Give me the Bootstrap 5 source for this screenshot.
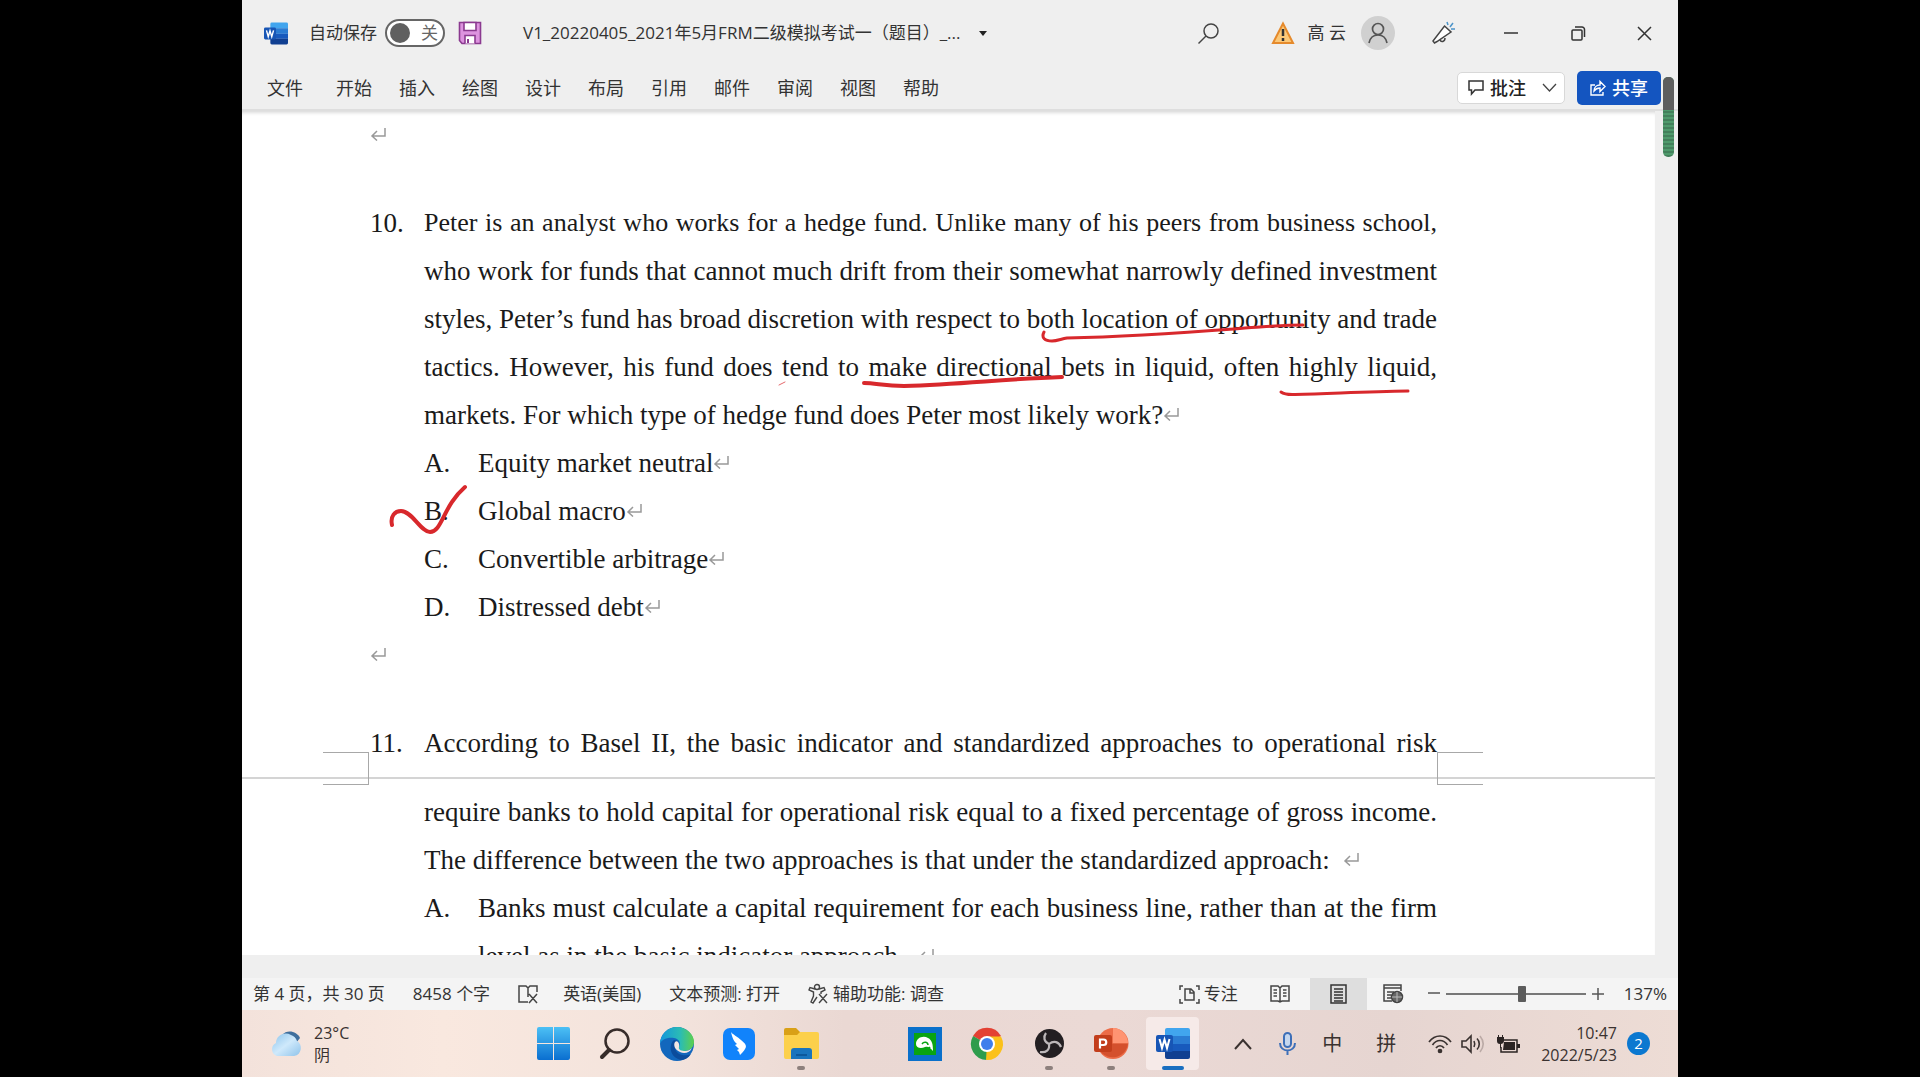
<!DOCTYPE html>
<html lang="zh-CN">
<head>
<meta charset="utf-8">
<meta name="viewport" content="width=device-width, initial-scale=1">
<title>Word</title>
<link rel="stylesheet" href="https://cdn.jsdelivr.net/npm/bootstrap@5.3.0/dist/css/bootstrap.min.css">
<style>
  body { background: #000; color: #333; font: 17px/24px "Open Sans", "Noto Sans CJK SC", sans-serif; }
  button { font: inherit; color: inherit; }
  svg { display: block; flex: none; overflow: visible; }
  .desk { margin: 0 242px; background: #efefef; }
  .plain { border: 0; background: none; padding: 0; display: flex; align-items: center; justify-content: center; }

  .titlebar { height: 66px; padding: 0 0 0 22px; }
  .autosave { gap: 8px; margin: 0 13px 0 21px; }
  .pill { width: 60px; height: 28px; border: 2px solid #666; border-radius: 14px; background: #fff; color: #666; padding: 0 5px 0 3px; }
  .pill input { appearance: none; width: 20px; height: 20px; border-radius: 50%; background: #606060; margin: 0; }
  .doc-title { margin-left: 41px; gap: 18px; white-space: nowrap; }
  .win-btn { width: 67px; height: 54px; }
  .who { margin: 0 15px 0 14px; gap: 15px; }
  .avatar-disc { width: 34px; height: 34px; border-radius: 50%; background: #d0d0d0; }
  .find { margin-right: 53px; }

  .tabs { height: 45px; padding: 0 17px 0 25px; border-bottom: 2px solid #dedede; }
  .tabs .nav { gap: 27px; }
  .tabs .nav-link { padding: 0; color: #333; font-size: 18px; }
  .tabs .nav-item:first-child { margin-right: 6px; }
  .notes-btn { height: 32px; padding: 0 7px 0 10px; gap: 6px; background: #fff; border: 1px solid #d8d8d8; border-radius: 5px; font-size: 18px; font-weight: 500; color: #222; }
  .notes-btn .chev { margin-left: 10px; }
  .share-btn { height: 34px; width: 84px; gap: 6px; border-radius: 5px; background: #1455c0; color: #fff; font-size: 18px; font-weight: 500; }

  .work { min-height: 0; }
  .sheet { background: #fff; overflow: hidden; position: relative; color: #1a1a1a; font: 27px/48px "Liberation Serif", "Noto Sans CJK SC", serif; box-shadow: inset 0 4px 4px -3px #ccc; }
  .gutter { width: 23px; position: relative; }
  .thumb { position: absolute; right: 4px; top: -34px; width: 11px; height: 80px; border-radius: 5px; background: repeating-linear-gradient(#4f9a6c 0 2px, #43805b 2px 4px); overflow: hidden; }
  .thumb span { display: block; height: 33px; background: #5e5e5e; }
  .block-row { margin: 0 218px 0 128px; }
  .blank-row { height: 46px; margin-bottom: 42px; }
  .num { width: 54px; flex: none; }
  .body-col { min-width: 0; }
  .ln { display: block; text-align: justify; text-align-last: justify; white-space: nowrap; }
  .ln-dense { font-size: 26px; }
  .ret { display: inline-block; vertical-align: 3px; }
  .page-gap { height: 21px; position: relative; }
  .page-gap::before { content: ""; position: absolute; left: 0; right: 0; top: 10px; border-top: 2px solid #d4d4d4; }
  .corner-l, .corner-r { position: absolute; top: -15px; height: 33px; width: 46px; border: 1px solid #a8a8a8; }
  .corner-l { left: 81px; border-left: 0; }
  .corner-r { right: 172px; border-right: 0; }
  .ink { position: absolute; left: 0; top: 0; pointer-events: none; }

  .under { height: 23px; }
  .status { height: 32px; background: #f4f4f4; padding: 0 11px 0 11px; white-space: nowrap; }
  .status .plain { height: 32px; }
  .gap-28 { margin-left: 28px; }
  .pct { margin-left: 20px; }
  .view-on { background: #dedede; }
  .zoomer { appearance: none; width: 140px; height: 20px; background: linear-gradient(#777, #777) center/100% 2px no-repeat; margin: 0 6px; }
  .zoomer::-webkit-slider-thumb { appearance: none; width: 8px; height: 16px; background: #5c5c5c; border-radius: 1px; }

  .taskbar { height: 67px; background: linear-gradient(90deg, #f3e2db 0, #f9e8df 14%, #f3e3dc 30%, #ead8d3 42%, #ebd9d5 60%, #e6d5d1 80%, #eddcd5 100%); white-space: nowrap; color: #3a3230; }
  .weather { padding-left: 28px; gap: 12px; width: 280px; line-height: 22px; font-size: 16px; text-align: left; }
  .app { width: 62px; height: 67px; position: relative; }
  .app.run::after { content: ""; position: absolute; left: 27px; bottom: 7px; width: 8px; height: 4px; border-radius: 2px; background: #8d807d; }
  .app.now::before { content: ""; position: absolute; left: 4px; top: 7px; width: 53px; height: 53px; border-radius: 4px; background: #f6eae8; }
  .app.now::after { left: 20px; width: 22px; background: #1a6fc0; }
  .app svg { position: relative; }
  .tray { margin-right: 28px; }
  .clock { font-size: 16px; line-height: 22px; text-align: right; margin: 0 10px 0 21px; }
  .count { width: 23px; height: 23px; border-radius: 50%; background: #0b78d0; color: #fff; font-size: 15px; line-height: 23px; }
  .ime { font-size: 20px; margin-left: 24px; }
  .ime + .ime { margin-left: 34px; }
  .wifi { margin: 0 9px 0 32px; }
  .vol { margin-right: 11px; }
</style>
<script src="https://cdn.jsdelivr.net/npm/bootstrap@5.3.0/dist/js/bootstrap.bundle.min.js"></script>
</head>
<body>
<svg width="0" height="0" class="position-absolute" aria-hidden="true">
  <defs>
    <linearGradient id="blu" x2="0" y2="1"><stop offset="0" stop-color="#4cc0f5"/><stop offset="1" stop-color="#0a6fd0"/></linearGradient>
    <linearGradient id="edg" x1="0" y1="0" x2="1" y2="0"><stop offset="0" stop-color="#1496dc"/><stop offset=".6" stop-color="#2bbcb4"/><stop offset="1" stop-color="#5ed04b"/></linearGradient>
    <linearGradient id="cld" x2="1" y2="1"><stop offset="0" stop-color="#8cc4ec"/><stop offset=".5" stop-color="#cfe9fb"/><stop offset="1" stop-color="#8fc3ea"/></linearGradient>
    <symbol id="ret" viewBox="0 0 16 14"><path d="M15 1v8H2M7 4L2 9l5 4.500" fill="none" stroke="#999" stroke-width="1.500"/></symbol>
    <symbol id="word" viewBox="0 0 34 31">
      <path d="M9 2a2 2 0 0 1 2-2h21a2 2 0 0 1 2 2v6H9z" fill="#41a5ee"/><path d="M9 8h25v8H9z" fill="#2b7cd3"/><path d="M9 16h25v7H9z" fill="#185abd"/><path d="M9 23h25v6a2 2 0 0 1-2 2H11a2 2 0 0 1-2-2z" fill="#103f91"/>
      <rect y="7" width="17" height="17" rx="2" fill="#1755b5"/><path d="M3.500 11l2.500 9 2.500-8.500L11 20l2.500-9" fill="none" stroke="#fff" stroke-width="2"/>
    </symbol>
  </defs>
</svg>

<div class="desk vh-100 d-flex flex-column overflow-hidden">
  <header class="titlebar d-flex align-items-center flex-shrink-0">
    <svg width="24" height="23"><use href="#word"/></svg>
    <label class="autosave d-flex align-items-center">自动保存
      <span class="pill d-flex align-items-center justify-content-between"><input type="checkbox" role="switch"><span>关</span></span>
    </label>
    <button class="plain" aria-label="保存"><svg width="24" height="24" viewBox="0 0 24 24"><path d="M1.500 1.500h21v21H4l-2.500-3z" fill="#dd93df" stroke="#8b3a90" stroke-width="1.600"/><path d="M6 1.500h12v8H6zM7 22.500v-8h10v8" fill="#fff" stroke="#8b3a90" stroke-width="1.600"/><path d="M10 22v-4" stroke="#8b3a90" stroke-width="2"/></svg></button>
    <button class="plain doc-title">V1_20220405_2021年5月FRM二级模拟考试一（题目）_...
      <svg width="8" height="5"><path d="M0 0h8L4 5z" fill="#222"/></svg></button>
    <button class="plain find ms-auto" aria-label="搜索"><svg width="21" height="21" fill="none" stroke="#444" stroke-width="1.500"><circle cx="13" cy="8" r="7"/><path d="M8 13l-7.500 7.500"/></svg></button>
    <svg width="22" height="22"><path d="M11 1.500L21 21H1z" fill="#fbc878" stroke="#e58a2c" stroke-width="2"/><path d="M11 7v7M11 16v3" stroke="#333" stroke-width="2.500"/></svg>
    <div class="who d-flex align-items-center"><span>高 云</span>
      <span class="avatar-disc d-flex align-items-center justify-content-center"><svg width="20" height="21" fill="none" stroke="#555" stroke-width="1.700"><circle cx="10" cy="6" r="5.500"/><path d="M1 20c1-5 4-8 9-8s8 3 9 8"/></svg></span></div>
    <button class="plain win-btn" aria-label="即将推出"><svg width="24" height="24" fill="none" stroke="#444" stroke-width="1.500"><path d="M12.500 5l6.500 6L5 20.500l-2.500 1.500-1.500-2z" fill="#fff"/><path d="M8 19c1 2.500 5 2 5-2"/><path d="M15 1l1 3M21 2l-3 4M19 8h4" stroke="#4b93c9"/></svg></button>
    <button class="plain win-btn" aria-label="最小化"><svg width="14" height="2"><path d="M0 1h14" stroke="#333" stroke-width="1.500"/></svg></button>
    <button class="plain win-btn" aria-label="还原"><svg width="14" height="15" fill="none" stroke="#333" stroke-width="1.500"><rect x="1" y="4" width="10" height="10" rx="1"/><path d="M4 1h7a2.500 2.500 0 0 1 2.500 2.500V11"/></svg></button>
    <button class="plain win-btn" aria-label="关闭"><svg width="15" height="15"><path d="M1 1l13 13M14 1L1 14" stroke="#333" stroke-width="1.500"/></svg></button>
  </header>

  <div class="tabs d-flex align-items-center flex-shrink-0">
    <ul class="nav flex-nowrap">
      <li class="nav-item"><a class="nav-link" href="#">文件</a></li>
      <li class="nav-item"><a class="nav-link" href="#">开始</a></li>
      <li class="nav-item"><a class="nav-link" href="#">插入</a></li>
      <li class="nav-item"><a class="nav-link" href="#">绘图</a></li>
      <li class="nav-item"><a class="nav-link" href="#">设计</a></li>
      <li class="nav-item"><a class="nav-link" href="#">布局</a></li>
      <li class="nav-item"><a class="nav-link" href="#">引用</a></li>
      <li class="nav-item"><a class="nav-link" href="#">邮件</a></li>
      <li class="nav-item"><a class="nav-link" href="#">审阅</a></li>
      <li class="nav-item"><a class="nav-link" href="#">视图</a></li>
      <li class="nav-item"><a class="nav-link" href="#">帮助</a></li>
    </ul>
    <button class="plain notes-btn ms-auto me-2"><svg width="16" height="15" fill="none" stroke="#333" stroke-width="1.500"><path d="M1 1h14v9H7l-3.500 4v-4H1z"/></svg>批注<svg class="chev" width="15" height="8" fill="none" stroke="#444" stroke-width="1.300"><path d="M1 0l6.500 7L14 0"/></svg></button>
    <button class="plain share-btn ms-1"><svg width="16" height="16" fill="none" stroke="#fff" stroke-width="1.400"><path d="M5 5H1v10h12v-3M4 11c0-4 3-6 6-6V1.500l5 5-5 5V8C7 8 5.500 9 4 11z"/></svg>共享</button>
  </div>

  <main class="work d-flex flex-grow-1">
    <article class="sheet flex-grow-1">
      <div class="block-row blank-row d-flex align-items-center"><svg width="16" height="14"><use href="#ret"/></svg></div>
      <div class="block-row d-flex">
        <div class="num">10.</div>
        <div class="body-col flex-grow-1">
          <span class="ln ln-dense">Peter is an analyst who works for a hedge fund. Unlike many of his peers from business school,</span>
          <span class="ln">who work for funds that cannot much drift from their somewhat narrowly defined investment</span>
          <span class="ln">styles, Peter’s fund has broad discretion with respect to both location of opportunity and trade</span>
          <span class="ln">tactics. However, his fund does tend to make directional bets in liquid, often highly liquid,</span>
          <div>markets. For which type of hedge fund does Peter most likely work?<svg class="ret" width="16" height="14"><use href="#ret"/></svg></div>
          <div class="d-flex"><span class="num">A.</span><span>Equity market neutral<svg class="ret" width="16" height="14"><use href="#ret"/></svg></span></div>
          <div class="d-flex"><span class="num">B.</span><span>Global macro<svg class="ret" width="16" height="14"><use href="#ret"/></svg></span></div>
          <div class="d-flex"><span class="num">C.</span><span>Convertible arbitrage<svg class="ret" width="16" height="14"><use href="#ret"/></svg></span></div>
          <div class="d-flex"><span class="num">D.</span><span>Distressed debt<svg class="ret" width="16" height="14"><use href="#ret"/></svg></span></div>
        </div>
      </div>
      <div class="block-row blank-row d-flex align-items-center"><svg width="16" height="14"><use href="#ret"/></svg></div>
      <div class="block-row d-flex">
        <div class="num">11.</div>
        <div class="body-col flex-grow-1"><span class="ln">According to Basel II, the basic indicator and standardized approaches to operational risk</span></div>
      </div>
      <div class="page-gap"><span class="corner-l"></span><span class="corner-r"></span></div>
      <div class="block-row d-flex">
        <div class="num"></div>
        <div class="body-col flex-grow-1">
          <span class="ln">require banks to hold capital for operational risk equal to a fixed percentage of gross income.</span>
          <div>The difference between the two approaches is that under the standardized approach: &nbsp;<svg class="ret" width="16" height="14"><use href="#ret"/></svg></div>
          <div class="d-flex"><span class="num">A.</span>
            <div class="body-col flex-grow-1"><span class="ln">Banks must calculate a capital requirement for each business line, rather than at the firm</span>
              <div>level as in the basic indicator approach. &nbsp;<svg class="ret" width="16" height="14"><use href="#ret"/></svg></div></div></div>
        </div>
      </div>
      <svg class="ink" width="1300" height="500" viewBox="242 111 1300 500" fill="none" stroke="#d8282c" stroke-width="3" stroke-linecap="round" stroke-linejoin="round">
        <path d="M1044 332c-3 6 1 9 8 9 5 0 9-2 15-3C1150 336 1230 329 1260 327c15-1 30-2 43-2"/>
        <path d="M864 383c12 0 20 3 40 3 60-2 100-7 158-9" stroke-width="4"/>
        <path d="M1281 392c4 3 8 2.500 14 2.500 40-1 70-3 113-3.500"/>
        <path d="M779 385l6-3" stroke-width="1" opacity=".7"/>
        <path d="M392 525c-2-9 3-14 9-14 11 0 20 21 29 21 12 0 13-26 35-45" stroke-width="4"/>
      </svg>
    </article>
    <div class="gutter flex-shrink-0"><div class="thumb"><span></span></div></div>
  </main>
  <div class="under flex-shrink-0"></div>

  <footer class="status d-flex align-items-center flex-shrink-0">
    <span>第 4 页，共 30 页</span>
    <span class="gap-28">8458 个字</span>
    <svg class="gap-28" width="21" height="19" fill="none" stroke="#444" stroke-width="1.500"><path d="M10 17H1V1h7l2 2 2-2h7v6M10 3v9M11 9l8 9M19 9l-8 9"/></svg>
    <span class="ms-4">英语(美国)</span>
    <span class="gap-28">文本预测: 打开</span>
    <svg class="gap-28" width="21" height="20" fill="none" stroke="#444" stroke-width="1.400"><circle cx="9" cy="3" r="2.500"/><path d="M7 5L2 3.500 1 6l4.500 2v4L3 18l2 1 4-6M11 5l5-1.500L17 6l-4 2v2M11 10l8 9M19 10l-8 9"/></svg>
    <span class="ms-1">辅助功能: 调查</span>
    <button class="plain gap-1 ms-auto"><svg width="21" height="19" fill="none" stroke="#444" stroke-width="1.500"><path d="M4 1H1v4M17 1h3v4M4 18H1v-4M17 18h3v-4M6 4h6l3 3v8H6zM11 4v4h4"/></svg>专注</button>
    <button class="plain px-3" aria-label="阅读视图"><svg class="ms-3 me-1" width="20" height="18" fill="none" stroke="#444" stroke-width="1.500"><path d="M1 1h7l2 2 2-2h7v15h-7l-2 1-2-1H1zM10 3v14M3.500 5H7M3.500 8H7M3.500 11H7M13 5h3.500M13 8h3.500M13 11h3.500"/></svg></button>
    <button class="plain view-on px-3" aria-label="页面视图"><svg class="mx-1" width="17" height="20" fill="none" stroke="#333" stroke-width="1.500"><path d="M1 1h15v18H1zM4 5h9M4 8h9M4 11h9M4 14h9M4 17h9"/></svg></button>
    <button class="plain px-3" aria-label="Web 版式"><svg width="21" height="20" fill="none" stroke="#444" stroke-width="1.500"><path d="M9 17H1V1h17v6M1 4h17M4 8h7M4 11h4M4 14h4"/><circle cx="14" cy="13" r="5.500" fill="#666"/><path d="M14 8v10M9 13h10" stroke="#bbb" stroke-width="1"/></svg></button>
    <button class="plain ms-2" aria-label="缩小"><svg width="12" height="12"><path d="M0 5h12" stroke="#555" stroke-width="1.500"/></svg></button>
    <input class="zoomer" type="range" min="0" max="100" value="55" aria-label="显示比例">
    <button class="plain" aria-label="放大"><svg width="12" height="12"><path d="M0 6h12M6 0v12" stroke="#555" stroke-width="1.500"/></svg></button>
    <span class="pct">137%</span>
  </footer>

  <nav class="taskbar d-flex align-items-center flex-shrink-0">
    <button class="plain weather justify-content-start">
      <svg width="32" height="27" viewBox="0 0 32 27"><path d="M12 5C17-1 27 1 30 8l-4 5z" fill="#3f6f9d"/><path d="M7 26a7 7 0 0 1-1-13C6 6 14 1 21 5c3 1 5 3 6 6 6 3 5 14-3 15z" fill="url(#cld)"/></svg>
      <span>23°C<br>阴</span></button>
    <button class="plain app" aria-label="开始"><svg width="33" height="33" fill="url(#blu)"><path d="M0 2a2 2 0 0 1 2-2h14v16H0zM17 0h14a2 2 0 0 1 2 2v14H17zM0 17h16v16H2a2 2 0 0 1-2-2zM17 17h16v14a2 2 0 0 1-2 2H17z"/></svg></button>
    <button class="plain app" aria-label="搜索"><svg width="30" height="31" fill="none" stroke="#372c2a"><circle cx="17" cy="13" r="11.500" stroke-width="2.500"/><path d="M9 22l-7 7" stroke-width="4" stroke-linecap="round"/></svg></button>
    <button class="plain app" aria-label="Edge"><svg width="34" height="34" viewBox="0 0 34 34"><circle cx="17" cy="17" r="17" fill="#1267bd"/><path d="M0 17C0 7 8 0 17 0s17 7 17 15c0 6-5 9-10 9-4 0-6-2-5-4 2-3 1-8-5-9C7 10 1 13 0 17z" fill="url(#edg)"/><path d="M14 13c-5 4-5 15 4 19 4 2 9 1 13-5-6 3-16 1-16-7 0-3 2-5 3-6z" fill="#0c4c9c"/><path d="M15 15c2-2 5 1 4 5-1 3 3 4 6 4 3 0 5-1 7-3-2 5-8 6-12 4-5-2-7-7-5-10z" fill="#f2e6e3"/></svg></button>
    <button class="plain app" aria-label="钉钉"><svg width="32" height="32"><rect width="32" height="32" rx="7" fill="#1183fb"/><path d="M8 4c1 2 7 5 10 8 5 4 6 6 4 9-1 2-3 4-5 6l-1-3-2-2 2-1-4-4 2-1c-3-2-5-7-6-12z" fill="#fff"/></svg></button>
    <button class="plain app run" aria-label="文件资源管理器"><svg width="35" height="31"><path d="M0 2a2 2 0 0 1 2-2h10l4 4v6H0z" fill="#d9a017"/><path d="M0 7h13l3-3h17a2 2 0 0 1 2 2v23a2 2 0 0 1-2 2H2a2 2 0 0 1-2-2z" fill="#fcd04b"/><path d="M7 31v-8a3 3 0 0 1 3-3h15a3 3 0 0 1 3 3v8z" fill="#1974bd"/><path d="M12 27h11" stroke="#0d599c" stroke-width="2"/></svg></button>
    <span class="app"></span>
    <button class="plain app" aria-label="录屏"><svg width="34" height="34"><path d="M0 0h34v34H0z" fill="#0a70cb"/><path d="M6 6h22v22H6z" fill="#09a413"/><path d="M8 17c0-6 7-9 12-6 4 2 5 6 5 13-3-3-4-5-8-4-4 2-9 1-9-3z" fill="#fff"/><path d="M14 17c2-3 6-2 6 1M19 24l3-4" stroke="#09a413" stroke-width="1.500" fill="none"/></svg></button>
    <button class="plain app" aria-label="Chrome"><svg width="32" height="32" viewBox="0 0 32 32"><path d="M16 16L2 8a16 16 0 0 1 28 0z" fill="#e34133"/><path d="M16 16L2.100 8A16 16 0 0 0 16 32l7-12z" fill="#2e9c4c"/><path d="M16 16l-1 16A16 16 0 0 0 30 8.500H16z" fill="#fbc11a"/><circle cx="16" cy="16" r="8" fill="#fff"/><circle cx="16" cy="16" r="6" fill="#3f7fec"/></svg></button>
    <button class="plain app run" aria-label="OBS"><svg width="29" height="29" fill="none"><circle cx="14.500" cy="14.500" r="14.500" fill="#231f22"/><g stroke="#bdb8ba" stroke-width="2.200"><path d="M14 15c-5-2-6-7-3-11"/><path d="M14 15c5-4 10-2 12 3"/><path d="M14 15c1 6-3 9-9 8"/></g></svg></button>
    <button class="plain app run" aria-label="PowerPoint"><svg width="34" height="31"><circle cx="19" cy="15.500" r="15.500" fill="#ec6c48"/><path d="M19 0a15.500 15.500 0 0 1 15 15.500H19z" fill="#ff9472"/><path d="M34 15.500a15.500 15.500 0 0 1-30 3.500l15-3.500z" fill="#d4502d"/><rect y="7" width="18" height="17" rx="2" fill="#c33e1c"/><path d="M6 20.500V11.500h3.500a2.700 2.700 0 0 1 0 5.500H6" fill="none" stroke="#fff" stroke-width="2.200"/></svg></button>
    <button class="plain app run now" aria-label="Word"><svg width="34" height="31"><use href="#word"/></svg></button>
    <div class="tray d-flex align-items-center ms-auto">
      <button class="plain" aria-label="显示隐藏的图标"><svg width="18" height="12" fill="none" stroke="#3a3230" stroke-width="2"><path d="M1 11l8-9 8 9"/></svg></button>
      <svg class="ms-4" width="22" height="24" fill="none" stroke="#3d6fb8" stroke-width="2"><rect x="8" y="1" width="7" height="14" rx="3.500" fill="#c5d7ef"/><path d="M4 11c0 10 15 10 15 0M11.500 18v5"/></svg>
      <span class="ime">中</span>
      <span class="ime">拼</span>
      <svg class="wifi" width="24" height="20" fill="none" stroke="#3a3230" stroke-width="1.700"><path d="M1 8c6-8 16-8 22 0M4.500 11c4-6 11-6 15 0M8 14c2-3 6-3 8 0"/><circle cx="12" cy="17" r="1.500" fill="#3a3230"/></svg>
      <svg class="vol" width="24" height="18" fill="none" stroke="#3a3230" stroke-width="1.600"><path d="M1 6h4l5-5v16l-5-5H1zM13 6c1 2 1 4 0 6M16 3.500c3 3 3 8 0 11"/><path d="M19 1c4 5 4 11 0 16" stroke="#bbaaa6"/></svg>
      <svg width="24" height="18"><path d="M7 5h14v12H5v-5" fill="none" stroke="#2b2423" stroke-width="1.500"/><path d="M8 7h11v8H7zM21 9h3v4h-3zM1 2h7v4c0 2-2 3-3 3v4H4V9C2 9 1 8 1 6zM2 0h1v3H2zM6 0h1v3H6z" fill="#2b2423"/></svg>
      <div class="clock">10:47<br>2022/5/23</div>
      <span class="count text-center">2</span>
    </div>
  </nav>
</div>
</body>
</html>
